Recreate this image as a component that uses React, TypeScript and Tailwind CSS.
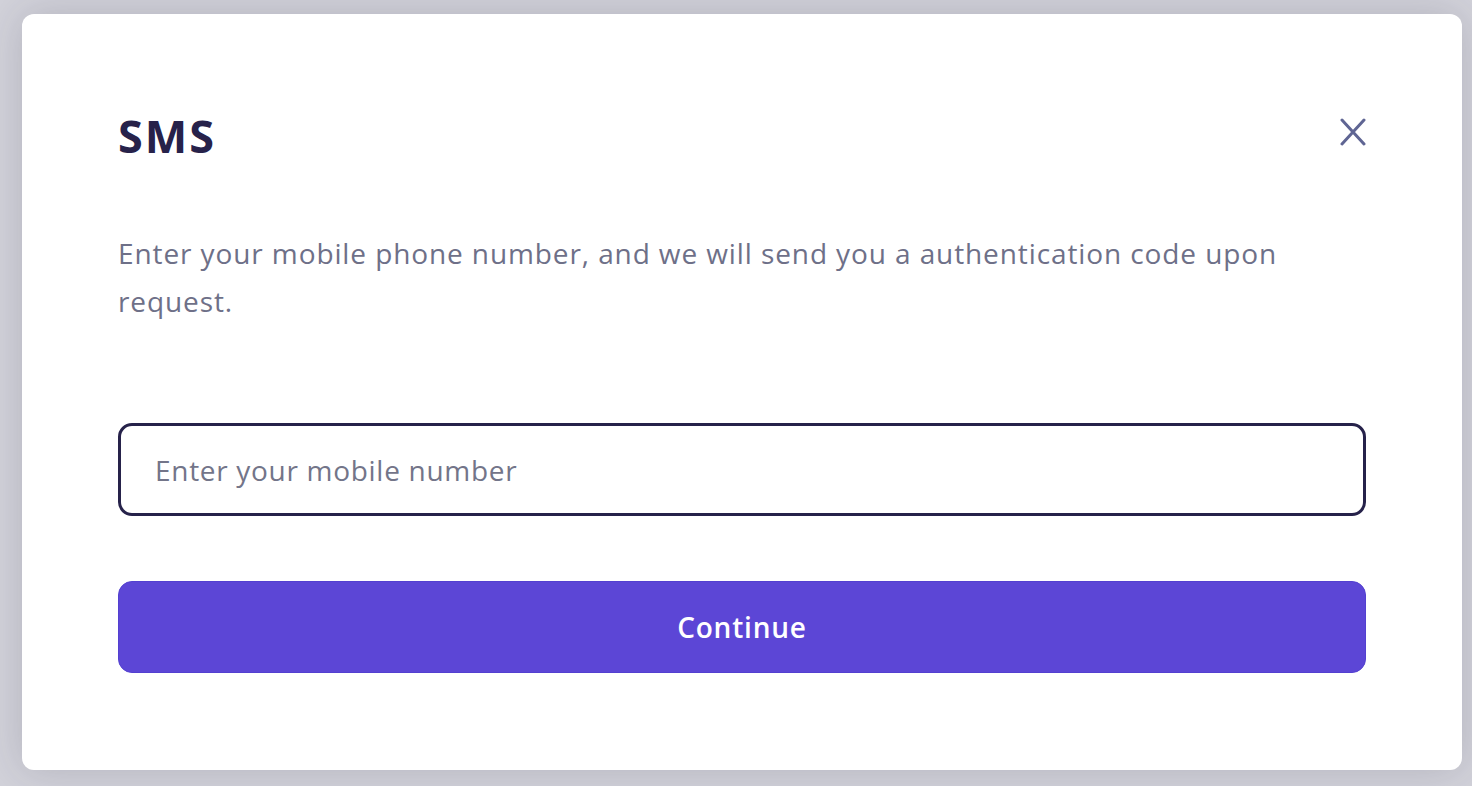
export default function App() {
  return (
    <div
      className="h-[786px] overflow-hidden bg-[#d2d2da] pt-[14px] pl-[22px]"
      style={{ fontFamily: '"Open Sans", Lato, sans-serif' }}
    >
      <div className="flex h-[756px] w-[1440px] flex-col rounded-[12px] bg-white px-[96px] pt-[100px] shadow-[0_0_40px_rgba(40,40,60,0.18)]">
        <div className="flex items-start justify-between">
          <h1 className="text-[45px] leading-[44px] font-bold tracking-[2px] text-[#27224a]">SMS</h1>
          <button className="mt-[4px] text-[#5f6593]">
            <svg width="26" height="28" viewBox="0 0 26 28" fill="none" stroke="currentColor" strokeWidth="3" strokeLinecap="round">
              <path d="M2 2l22 24M24 2L2 26" />
            </svg>
          </button>
        </div>
        <p className="mt-[71px] text-[28px] leading-[48px] tracking-[0.9px] text-[#6e7088]">
          Enter your mobile phone number, and we will send you a authentication code upon request.
        </p>
        <input
          type="text"
          placeholder="Enter your mobile number"
          className="mt-[98px] h-[93px] w-full rounded-[14px] border-[3px] border-[#26224a] px-[34px] text-[28px] tracking-[0.7px] text-[#27224a] outline-none placeholder:text-[#737589]"
        />
        <button className="mt-[65px] h-[92px] w-full rounded-[14px] border border-[#5340d0] bg-[#5c46d6] text-[28px] font-semibold tracking-[0.8px] text-white">
          Continue
        </button>
      </div>
    </div>
  )
}
